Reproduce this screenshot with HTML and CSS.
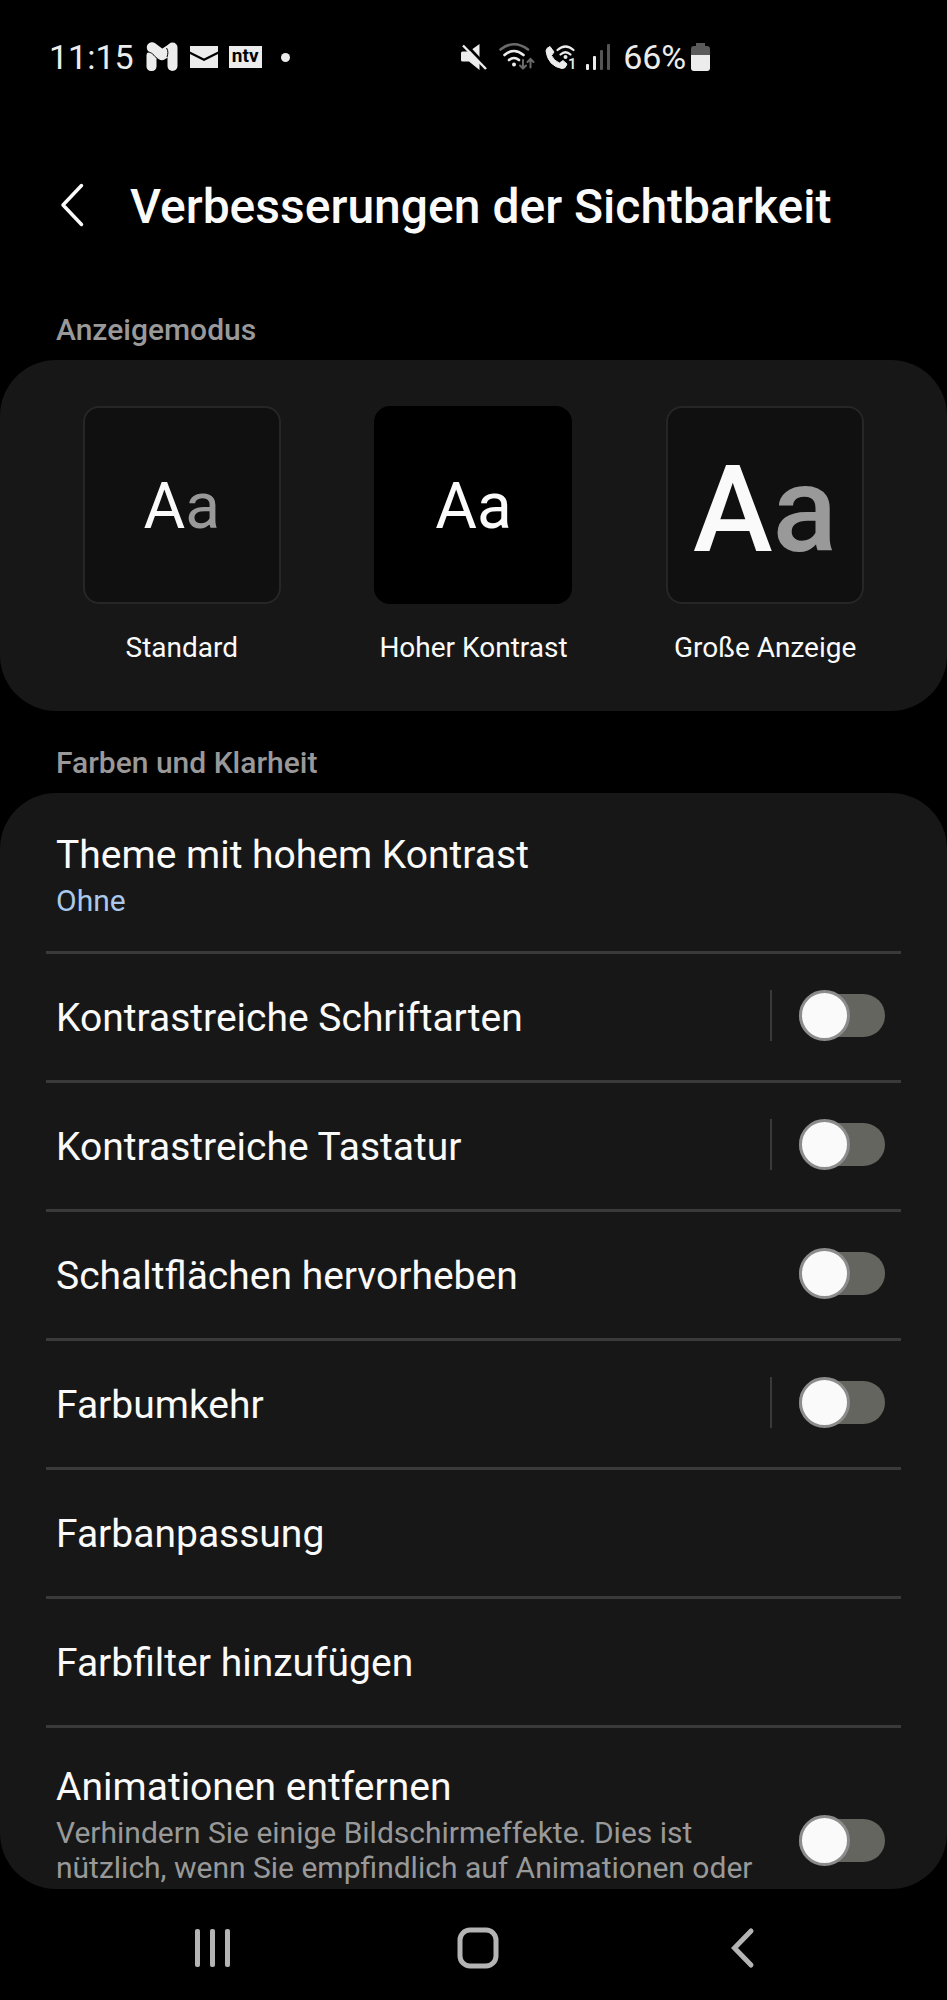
FILE: index.html
```html
<!DOCTYPE html>
<html lang="de">
<head>
<meta charset="utf-8">
<meta name="viewport" content="width=device-width, initial-scale=1">
<title>Verbesserungen der Sichtbarkeit</title>
<link rel="stylesheet" href="styles.css">
</head>
<body>
<div class="screen">
  <div class="status">
    <div class="status-group">
      <span class="clock">11:15</span>
      <svg class="icon-m" width="32" height="30" viewBox="0 0 32 30" aria-hidden="true">
        <rect x="0.5" y="9" width="10" height="20" rx="4.5" fill="#ececec"/>
        <path d="M6 5.5L16 13L25 7" fill="none" stroke="#ececec" stroke-width="10.5" stroke-linecap="round" stroke-linejoin="round"/>
        <rect x="21.5" y="0.5" width="10" height="28.500" rx="5" fill="#ececec"/>
        <path d="M0.500 10.500C4 9 7 12 10.500 16M20.500 6C22.500 9 22 12 21 15" fill="none" stroke="#000" stroke-width="1"/>
      </svg>
      <svg class="icon-mail" width="28" height="22" viewBox="0 0 28 22" aria-hidden="true">
        <path d="M0 0H28V5.500L14 12.500L0 5.500Z" fill="#ececec"/>
        <path d="M0 8L14 15L28 8V22H0Z" fill="#ececec"/>
      </svg>
      <span class="ntv">ntv</span>
      <span class="dot"></span>
    </div>
    <div class="status-group">
      <svg width="26" height="28" viewBox="0 0 26 28" aria-hidden="true">
        <path d="M0 10Q0 8.500 1.500 8.500H8L18.500 1V27L8 18.500H1.500Q0 18.500 0 17Z" fill="#ececec"/>
        <path d="M3.500 0L27 25" stroke="#000" stroke-width="3"/>
        <path d="M2 2.500L25 26" stroke="#ececec" stroke-width="2.500"/>
      </svg>
      <svg class="icon-wifi" width="37" height="28" viewBox="0 0 37 28" fill="none" stroke-linecap="round" aria-hidden="true">
        <path d="M1.500 6.500Q15 -4 29 6.500" stroke="#6a6a6a" stroke-width="2.600"/>
        <path d="M5.500 12Q15 4 24.500 12M10 17Q15 13 20 17" stroke="#ececec" stroke-width="2.600"/>
        <circle cx="15" cy="21.500" r="2" fill="#ececec"/>
        <path d="M24 17V25.500M21 22.500L24 25.500L27 22.500M31.500 24.500V16M28.500 19L31.500 16L34.500 19" stroke="#6a6a6a" stroke-width="2"/>
      </svg>
      <svg class="icon-call" width="32" height="28" viewBox="0 0 32 28" fill="none" aria-hidden="true">
        <path d="M5 3.500L9 9L6.500 12.500Q9 18 14.500 20L18 17.500L22 21Q20.500 26 17 25.500Q3 23 1 8Q1 5 5 3.500Z" fill="#ececec" stroke="#ececec" stroke-width="1" stroke-linejoin="round"/>
        <path d="M12.500 7Q20.500 0 28.500 7M15.500 11.500Q20.500 7 25.500 11.500" stroke="#ececec" stroke-width="2.200" stroke-linecap="round"/>
        <circle cx="20.500" cy="14" r="2" fill="#ececec"/>
        <text class="sim" x="23" y="26">1</text>
      </svg>
      <svg class="icon-signal" width="25" height="28" viewBox="0 0 25 28" aria-hidden="true">
        <rect x="0" y="21" width="3" height="6" rx="1" fill="#ececec"/>
        <rect x="7" y="13" width="3" height="14" rx="1" fill="#ececec"/>
        <rect x="14" y="7" width="3" height="20" rx="1" fill="#555"/>
        <rect x="21" y="1" width="3" height="26" rx="1" fill="#555"/>
      </svg>
      <span class="percent">66%</span>
      <svg class="icon-battery" width="19" height="28" viewBox="0 0 19 28" aria-hidden="true">
        <path d="M5 0H14V3H16Q19 3 19 6V13H0V6Q0 3 3 3H5Z" fill="#5a5a5a"/>
        <path d="M0 12H19V25Q19 28 16 28H3Q0 28 0 25Z" fill="#ececec"/>
      </svg>
    </div>
  </div>

  <header class="header">
    <button class="back" type="button" aria-label="Zurück">
      <svg width="24" height="44" viewBox="0 0 24 44" fill="none" aria-hidden="true">
        <path d="M21.500 2.500L3 22L21.500 41.500" stroke="#fafafa" stroke-width="3.500" stroke-linecap="round" stroke-linejoin="round"/>
      </svg>
    </button>
    <h1 class="title">Verbesserungen der Sichtbarkeit</h1>
  </header>

  <h2 class="section">Anzeigemodus</h2>
  <div class="card modes">
    <button class="mode" type="button">
      <span class="tile">A<span class="soft">a</span></span>
      <span class="mode-label">Standard</span>
    </button>
    <button class="mode" type="button">
      <span class="tile tile-contrast">Aa</span>
      <span class="mode-label">Hoher Kontrast</span>
    </button>
    <button class="mode" type="button">
      <span class="tile tile-large">A<span class="soft">a</span></span>
      <span class="mode-label">Große Anzeige</span>
    </button>
  </div>

  <h2 class="section">Farben und Klarheit</h2>
  <div class="card list">
    <div class="row row-tall">
      <div class="text">
        <span class="name">Theme mit hohem Kontrast</span>
        <span class="sub accent">Ohne</span>
      </div>
    </div>
    <div class="row">
      <label class="text name" for="fonts">Kontrastreiche Schriftarten</label>
      <span class="split"></span>
      <input class="switch" id="fonts" type="checkbox" role="switch">
    </div>
    <div class="row">
      <label class="text name" for="keyboard">Kontrastreiche Tastatur</label>
      <span class="split"></span>
      <input class="switch" id="keyboard" type="checkbox" role="switch">
    </div>
    <div class="row">
      <label class="text name" for="buttons">Schaltflächen hervorheben</label>
      <input class="switch" id="buttons" type="checkbox" role="switch">
    </div>
    <div class="row">
      <label class="text name" for="invert">Farbumkehr</label>
      <span class="split"></span>
      <input class="switch" id="invert" type="checkbox" role="switch">
    </div>
    <div class="row"><span class="text name">Farbanpassung</span></div>
    <div class="row"><span class="text name">Farbfilter hinzufügen</span></div>
    <div class="row row-tall row-last">
      <label class="text" for="motion">
        <span class="name">Animationen entfernen</span>
        <span class="sub">Verhindern Sie einige Bildschirmeffekte. Dies ist nützlich, wenn Sie empfindlich auf Animationen oder</span>
      </label>
      <input class="switch" id="motion" type="checkbox" role="switch">
    </div>
  </div>

  <nav class="nav">
    <button class="nav-button" type="button" aria-label="Letzte Apps">
      <svg width="42" height="42" viewBox="0 0 42 42" aria-hidden="true">
        <g fill="#b4b4b4">
          <rect x="3" y="2" width="5" height="38" rx="2"/>
          <rect x="18" y="2" width="5" height="38" rx="2"/>
          <rect x="33" y="2" width="5" height="38" rx="2"/>
        </g>
      </svg>
    </button>
    <button class="nav-button" type="button" aria-label="Startbildschirm">
      <svg width="42" height="42" viewBox="0 0 42 42" fill="none" aria-hidden="true">
        <rect x="3" y="3" width="36" height="36" rx="10" stroke="#b4b4b4" stroke-width="5"/>
      </svg>
    </button>
    <button class="nav-button" type="button" aria-label="Zurück">
      <svg width="42" height="42" viewBox="0 0 42 42" fill="none" aria-hidden="true">
        <path d="M29 4L12.500 21L29 38" stroke="#b4b4b4" stroke-width="5" stroke-linecap="round"/>
      </svg>
    </button>
  </nav>
</div>
</body>
</html>
```
FILE: styles.css
```css
*,
*::before {
  box-sizing: border-box;
}

body {
  margin: 0;
  background: #000;
  color: #fafafa;
  font-family: Roboto, "Liberation Sans", sans-serif;
}

button {
  padding: 0;
  border: 0;
  background: none;
  color: inherit;
  font: inherit;
}

svg {
  display: block;
  flex: none;
  overflow: visible;
}

.screen {
  display: flex;
  flex-direction: column;
  height: 100vh;
}

.status {
  display: flex;
  justify-content: space-between;
  padding: 37px 25% 19px 49px;
  color: #ececec;
  font-size: 34px;
  line-height: 40px;
}

.status-group {
  display: flex;
  align-items: center;
}

.icon-m {
  margin-left: 12px;
}

.icon-mail {
  margin-left: 12px;
}

.ntv {
  width: 33px;
  height: 22px;
  margin-left: 11px;
  background: #ececec;
  color: #000;
  font-size: 19px;
  font-weight: 700;
  line-height: 20px;
  text-align: center;
}

.dot {
  width: 9px;
  height: 9px;
  margin-left: 19px;
  border-radius: 50%;
  background: #ececec;
}

.icon-wifi {
  margin-left: 12px;
}

.icon-call {
  margin-left: 9px;
}

.sim {
  fill: #ececec;
  font-size: 15px;
  font-weight: 500;
}

.icon-signal {
  margin-left: 9px;
}

.percent {
  margin-left: 12px;
}

.icon-battery {
  margin-left: 5px;
}

.header {
  display: flex;
  align-items: center;
  padding: 83px 48px 43px 60px;
}

.back {
  width: 24px;
  margin: 0 46px 4px 0;
}

.title {
  margin: 0;
  font-size: 48px;
  font-weight: 500;
  line-height: 56px;
}

.section {
  margin: 0;
  padding: 34px 56px 13px;
  color: #999;
  font-size: 30px;
  font-weight: 500;
  line-height: 35px;
}

.card {
  border-radius: 56px;
  background: #171717;
}

.modes {
  display: grid;
  grid-template-columns: repeat(3, 1fr);
  padding: 46px 36px;
}

.mode {
  display: flex;
  flex-direction: column;
  align-items: center;
  gap: 27px;
}

.tile {
  display: flex;
  align-items: center;
  justify-content: center;
  width: 198px;
  height: 198px;
  padding-top: 2px;
  border: 2px solid #262626;
  border-radius: 16px;
  background: #101010;
  font-size: 64px;
}

.tile-contrast {
  border-color: #000;
  background: #000;
}

.tile-large {
  padding-top: 10px;
  font-size: 120px;
  font-weight: 500;
}

.soft {
  color: #999;
}

.mode-label {
  font-size: 28px;
  line-height: 34px;
}

.list {
  flex: 1;
  min-height: 0;
  overflow: hidden;
  padding: 0 46px;
}

.row {
  display: flex;
  align-items: center;
  min-height: 129px;
  padding: 2px 16px 0 10px;
  border-top: 3px solid #3a3a3a;
}

.row:first-child {
  border-top-color: transparent;
}

.row-tall {
  padding-top: 36px;
  padding-bottom: 33px;
}

.row-last {
  min-height: 230px;
}

.text {
  flex: 1;
}

.row-last .text {
  align-self: flex-start;
}

.name {
  display: block;
  font-size: 39px;
  line-height: 46px;
}

.sub {
  display: block;
  margin-top: 5px;
  padding-right: 32px;
  color: #999;
  font-size: 30px;
  line-height: 35px;
}

.accent {
  color: #a9c8ec;
}

.split {
  width: 2px;
  height: 51px;
  margin: 0 27px 6px 0;
  background: #3a3a3a;
}

.switch {
  appearance: none;
  display: flex;
  flex: none;
  align-items: center;
  width: 86px;
  height: 43px;
  margin: 0 0 6px;
  border-radius: 22px;
  background: #64655e;
}

.switch::before {
  content: "";
  flex: none;
  width: 51px;
  height: 51px;
  border: 3px solid #8c8c8c;
  border-radius: 50%;
  background: #fafafa;
}

.switch:checked {
  justify-content: flex-end;
}

.nav {
  display: grid;
  grid-template-columns: repeat(3, 1fr);
  height: 111px;
  padding: 7px 72px 0 80px;
}

.nav-button {
  display: flex;
  align-items: center;
  justify-content: center;
}
```
